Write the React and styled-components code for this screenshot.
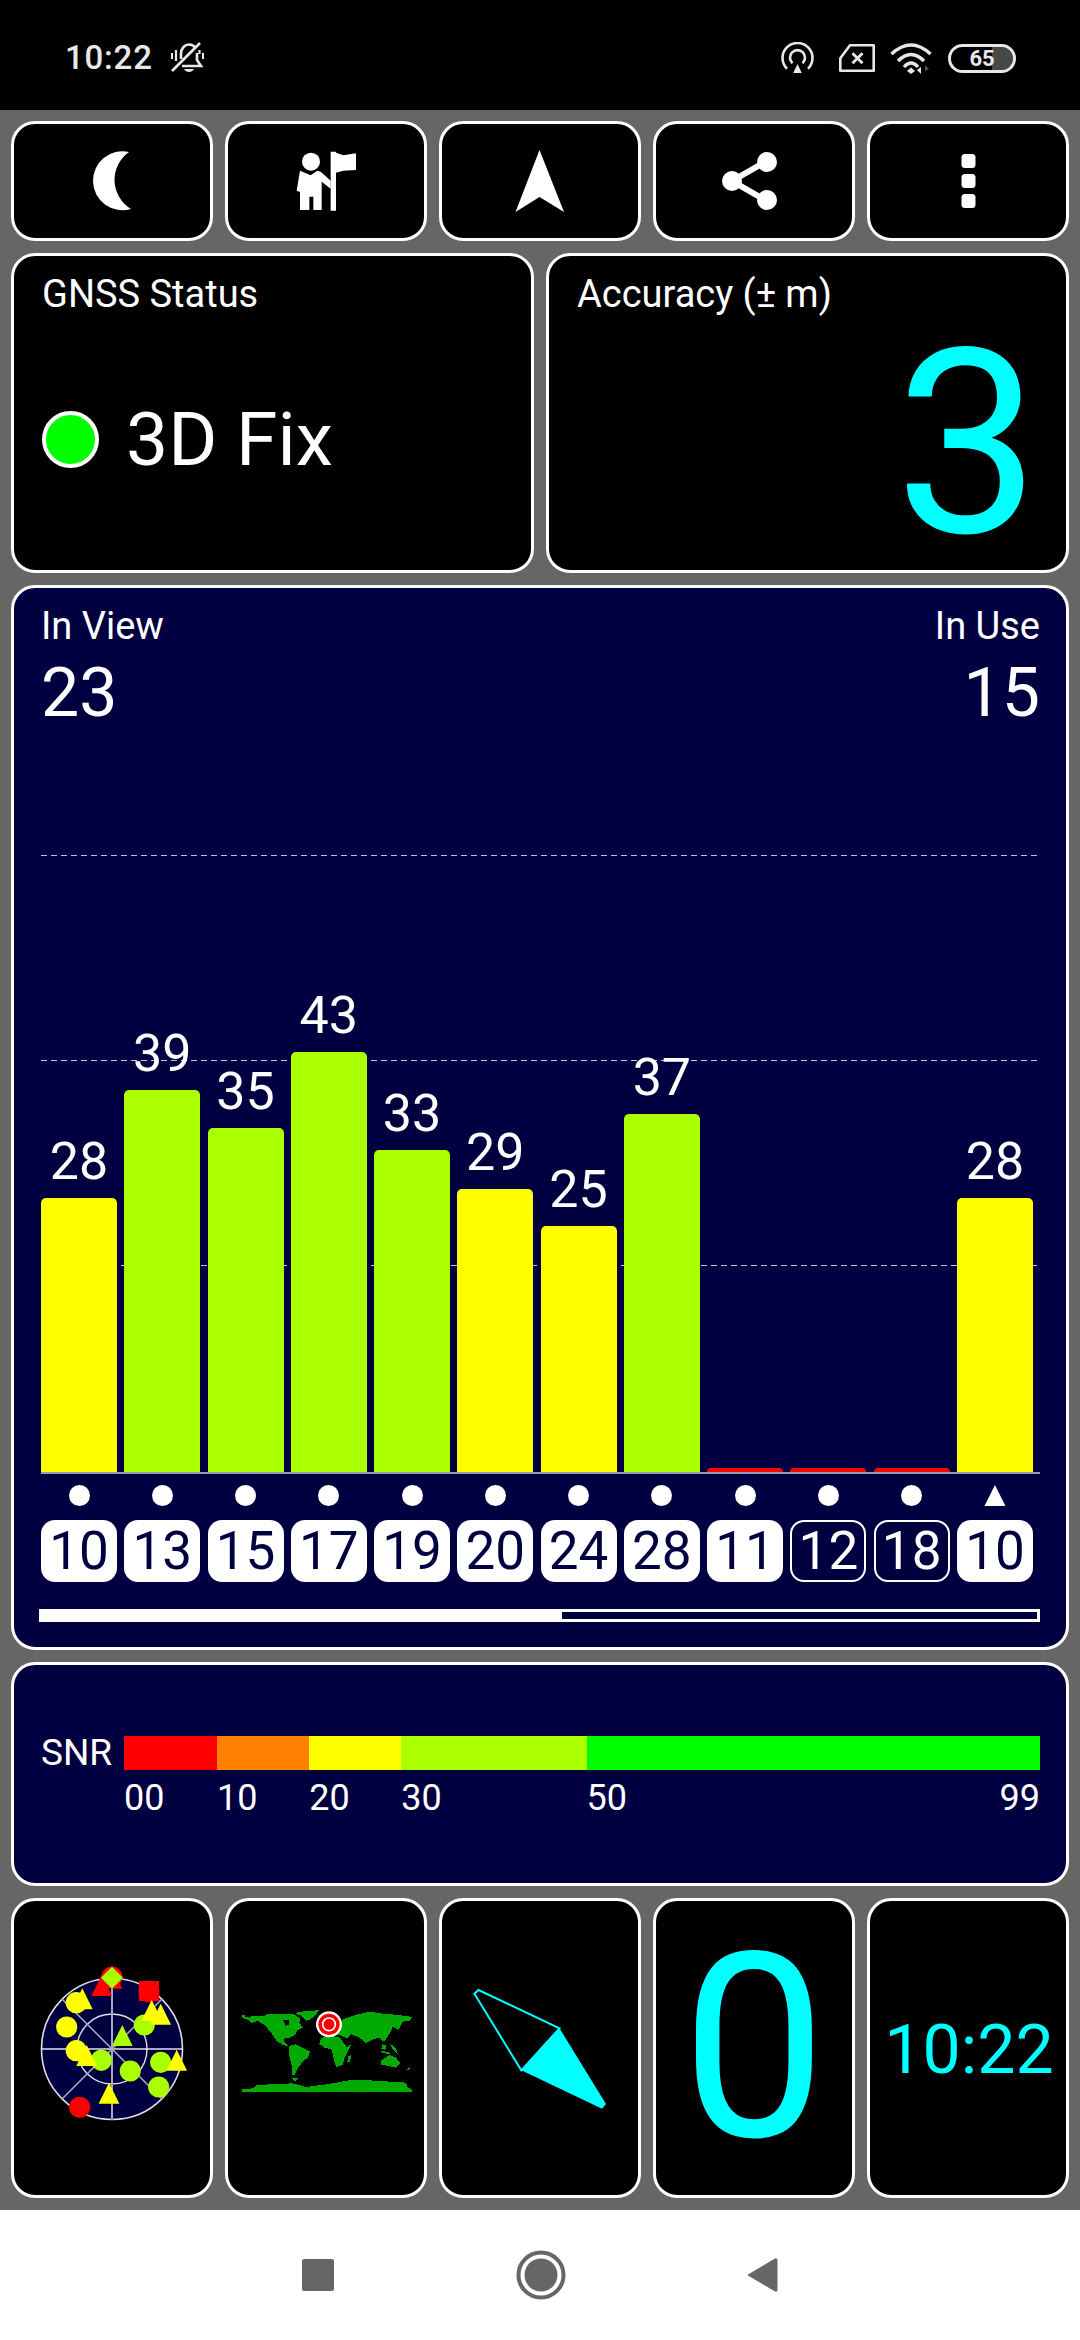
import React from "react";
import styled, { createGlobalStyle } from "styled-components";

const NAVY = "#000040";
const CYAN = "#00ffff";
const LIME = "#aaff00";
const YELLOW = "#ffff00";
const RED = "#ff0000";

const Global = createGlobalStyle`
  html, body { margin: 0; padding: 0; background: #fff; }
  * { box-sizing: border-box; }
  body { font-family: Roboto, "Liberation Sans", sans-serif; }
`;

const Screen = styled.div`
  width: 1080px;
  height: 2340px;
  display: flex;
  flex-direction: column;
  overflow: hidden;
`;

const StatusBar = styled.header`
  height: 110px;
  flex: none;
  background: #000;
  color: #e8e8e8;
  display: flex;
  align-items: center;
  padding: 6px 64px 0 65px;
  svg { display: block; flex: none; }
`;
const Clock = styled.span`
  font-size: 33px;
  font-weight: 500;
  letter-spacing: 0.8px;
  line-height: 40px;
  margin-right: 17px;
`;
const StatusRight = styled.div`
  margin-left: auto;
  display: flex;
  align-items: center;
`;
const Battery = styled.span`
  width: 68px;
  height: 29px;
  border: 3px solid #e8e8e8;
  border-radius: 15px;
  font-size: 22px;
  font-weight: 700;
  line-height: 23px;
  text-align: center;
  margin-left: 16px;
  background: linear-gradient(90deg, transparent 66%, #484848 66%);
  background-clip: padding-box;
`;

const Main = styled.main`
  flex: none;
  height: 2100px;
  background: #666;
  padding: 11px 11px 13px;
  display: flex;
  flex-direction: column;
  gap: 12px;
`;
const Row = styled.div`
  display: grid;
  grid-template-columns: repeat(${(p) => p.$cols}, 1fr);
  column-gap: 12px;
  height: ${(p) => p.$h}px;
  flex: none;
`;
const Card = styled.div`
  background: ${(p) => (p.$navy ? NAVY : "#000")};
  border: 3px solid #fff;
  border-radius: 24px;
  color: #fff;
  min-width: 0;
`;
const IconCard = styled(Card)`
  display: flex;
  align-items: center;
  justify-content: center;
  svg { display: block; flex: none; }
`;
const BigDigit = styled.span`
  font-size: 258px;
  line-height: 200px;
  color: ${CYAN};
`;
const TimeValue = styled.span`
  font-size: 68px;
  line-height: 80px;
  color: ${CYAN};
  margin: 4px 0 0 2px;
`;

const InfoCard = styled(Card)`
  padding: 16px 26px 0 28px;
  display: flex;
  flex-direction: column;
`;
const Label = styled.div`
  font-size: 38px;
  line-height: 44px;
`;
const FixRow = styled.div`
  display: flex;
  align-items: center;
  gap: 27px;
  height: 80px;
  margin-top: 83px;
`;
const FixDot = styled.span`
  width: 57px;
  height: 57px;
  border-radius: 50%;
  background: #00ff00;
  border: 4px solid #fff;
  flex: none;
`;
const FixText = styled.span`
  font-size: 75px;
  line-height: 80px;
`;
const AccuracyValue = styled(BigDigit)`
  align-self: flex-end;
  margin: 28px 0 0;
`;

const SkyCard = styled(Card)`
  padding: 16px 26px 0 27px;
  display: flex;
  flex-direction: column;
`;
const SkyHeader = styled.div`
  display: flex;
  justify-content: space-between;
`;
const SkyStat = styled.div`
  text-align: ${(p) => p.$align};
`;
const SkyValue = styled.div`
  font-size: 68px;
  line-height: 90px;
`;
const Chart = styled.div`
  position: relative;
  height: 736px;
  border-bottom: 2px solid #9a9ab4;
`;
const GridLine = styled.div`
  position: absolute;
  left: 0;
  right: 0;
  height: 1px;
  background: repeating-linear-gradient(90deg, #c4c4d4 0 6px, transparent 6px 10px);
`;
const ColumnGrid = styled.div`
  display: grid;
  grid-template-columns: repeat(12, 76px);
  column-gap: 7.27px;
`;
const Bars = styled(ColumnGrid)`
  position: relative;
  height: 100%;
  align-items: end;
`;
const BarSlot = styled.div`
  display: flex;
  flex-direction: column;
  align-items: center;
`;
const BarValue = styled.span`
  font-size: 52px;
  line-height: 48px;
  margin-bottom: 12px;
`;
const Bar = styled.div`
  width: 76px;
  background: ${(p) => p.$color};
  border-radius: 5px 5px 0 0;
`;
const Markers = styled(ColumnGrid)`
  margin-top: 11px;
  height: 21px;
  justify-items: center;
`;
const Dot = styled.span`
  width: 21px;
  height: 21px;
  border-radius: 50%;
  background: #fff;
`;
const Tri = styled.span`
  width: 21px;
  height: 21px;
  background: #fff;
  clip-path: polygon(50% 0, 100% 100%, 0 100%);
`;
const Badges = styled(ColumnGrid)`
  margin-top: 14px;
`;
const Badge = styled.span`
  height: 62px;
  border-radius: 14px;
  font-size: 53px;
  line-height: ${(p) => (p.$off ? "58px" : "62px")};
  text-align: center;
  background: ${(p) => (p.$off ? NAVY : "#fff")};
  color: ${(p) => (p.$off ? "#fff" : NAVY)};
  border: ${(p) => (p.$off ? "2px solid #fff" : "none")};
`;
const Progress = styled.div`
  height: 13px;
  margin: 27px 0 0 -2px;
  border: 3px solid #fff;
  background: linear-gradient(90deg, #fff 52.3%, ${NAVY} 52.3%);
`;

const SnrCard = styled(Card)`
  padding: 71px 26px 0 27px;
`;
const SnrRow = styled.div`
  display: flex;
  align-items: center;
`;
const SnrLabel = styled.span`
  width: 83px;
  font-size: 37px;
  line-height: 34px;
  flex: none;
`;
const Segments = styled.div`
  flex: 1;
  display: flex;
  height: 34px;
`;
const Segment = styled.div`
  flex: ${(p) => p.$w} 0 0;
  background: ${(p) => p.$color};
`;
const ScaleRow = styled.div`
  display: flex;
  margin: 10px 0 0 83px;
  font-size: 36px;
  line-height: 36px;
`;
const Tick = styled.div`
  flex: ${(p) => p.$w} 0 0;
  display: flex;
  justify-content: space-between;
`;

const MapBox = styled.div`
  margin-bottom: 4px;
`;

const NavBar = styled.nav`
  flex: 1;
  background: #fff;
  display: flex;
  align-items: center;
  justify-content: center;
  gap: 182px;
  svg { display: block; }
`;

const Stroke = ({ children, ...rest }) => (
  <svg fill="none" stroke="#e8e8e8" strokeWidth="2.6" {...rest}>
    {children}
  </svg>
);

const BellOff = () => (
  <Stroke width="36" height="32" viewBox="0 0 36 32">
    <path d="M2 29 L30 1" />
    <path d="M11 17 V12 C11 6 15 2.5 19 2.5 C21.5 2.5 24 3.8 25.5 6 M27 11 V18 L31 24 H12" />
    <path d="M2 11 V17 M33 11 V17" strokeWidth="2" />
    <path d="M6 8 V19 M29.5 8 V12" strokeWidth="2.2" />
    <path d="M14 27 H24 C22 31 16 31 14 27 Z" fill="#e8e8e8" stroke="none" />
  </Stroke>
);
const Hotspot = () => (
  <Stroke width="33" height="32" viewBox="0 0 33 32" style={{ marginRight: 25 }}>
    <path d="M6 26.7 A15 15 0 1 1 27 26.7" />
    <path d="M11.5 21.2 A7.5 7.5 0 1 1 21.5 21.2" />
    <path d="M16.5 22 L20.8 31 H12.2 Z" fill="#e8e8e8" stroke="none" />
  </Stroke>
);
const Sim = () => (
  <Stroke width="36" height="28" viewBox="0 0 36 28" style={{ marginRight: 15 }}>
    <path d="M1.3 14.3 L11 1.3 H34.7 V26.7 H1.3 Z" strokeLinejoin="round" />
    <path d="M13.5 9.3 L23.5 19.3 M23.5 9.3 L13.5 19.3" strokeWidth="2.8" />
  </Stroke>
);
const Wifi = () => (
  <Stroke width="42" height="31" viewBox="0 0 42 31" strokeWidth="3.4">
    <path d="M1.5 11 Q21 -7 40.5 11" />
    <path d="M8 18 Q21 5 34 18" />
    <path d="M14 24 Q21 16 28 24" />
    <path d="M21 24.5 L25 28 L21 31 L17 28 Z" fill="#e8e8e8" stroke="none" />
    <path d="M31 24 V31 L27 27 Z" fill="#e8e8e8" stroke="none" />
    <path d="M35 22 L39 26 L35 28 Z" fill="#555" stroke="none" />
  </Stroke>
);

const Moon = () => (
  <svg width="196" height="114" viewBox="13 125 196 114">
    <path d="M128 153 A29.5 29.5 0 1 0 130 210 A34 34 0 0 1 128 153 Z" fill="#fff" />
  </svg>
);
const PersonFlag = () => (
  <svg width="90" height="90" viewBox="0 0 270 270" style={{ margin: "8px 0 0 -2px" }}>
    <circle cx="93" cy="65" r="27" fill="#fff" />
    <path
      d="M60 92 L92 106 L112 92 L122 95 L152 122 L152 146 L125 125 V210 H100 V170 H88 V210 H60 V156 L50 152 Z"
      fill="#fff"
    />
    <path d="M152 35 H168 V38 L190 46 L228 40 V90 L190 92 L168 98 V212 H152 Z" fill="#fff" />
  </svg>
);
const NavArrow = () => (
  <svg width="50" height="64" viewBox="0 0 50 64">
    <path d="M24.5 1 L49 63 L24.5 48 L0.5 63 Z" fill="#fff" />
  </svg>
);
const Share = () => (
  <svg width="60" height="62" viewBox="0 0 60 62" style={{ marginRight: 6 }}>
    <path d="M44 12 L11 31 L44 50" stroke="#fff" strokeWidth="6" fill="none" />
    <circle cx="46" cy="12" r="10" fill="#fff" />
    <circle cx="11" cy="31" r="10" fill="#fff" />
    <circle cx="46" cy="50" r="10" fill="#fff" />
  </svg>
);
const More = () => (
  <svg width="15" height="55" viewBox="0 0 15 55">
    {[0, 20, 40].map((y) => (
      <rect key={y} x="0.5" y={y} width="14" height="14" rx="3.5" fill="#fff" />
    ))}
  </svg>
);

const circles = [
  [112, 1976, RED], [149, 1990.7, RED], [76.3, 2001.7, YELLOW], [66.7, 2026, YELLOW],
  [144.3, 2024, LIME], [76.3, 2049.7, YELLOW], [101.3, 2059.3, LIME], [130.3, 2070, LIME],
  [160.7, 2061.3, LIME], [158.7, 2086, LIME], [79.7, 2106.3, RED],
];
const triangles = [
  [112, 1966.7, RED], [101.7, 1974, RED], [82.3, 1987.3, YELLOW], [151.7, 1999, YELLOW],
  [160.7, 2002.7, YELLOW], [122.3, 2024, LIME], [86.7, 2044, YELLOW], [176.7, 2048.7, YELLOW],
  [109, 2081.7, YELLOW],
];
const Radar = () => (
  <svg width="196" height="294" viewBox="14 1900 196 294">
    <circle cx="112" cy="2048" r="70.5" fill={NAVY} stroke="#dcdcea" strokeWidth="1.6" />
    <circle cx="112" cy="2048" r="35" fill="none" stroke="#dcdcea" strokeWidth="1.4" />
    <path d="M112 1977 V2119" stroke="#a8a8c0" strokeWidth="2" />
    <path d="M41 2048 H183" stroke="#e0e0ea" strokeWidth="1.6" />
    <path d="M62 1998 L162 2098 M162 1998 L62 2098" stroke="#a8a8c0" strokeWidth="1.5" />
    {circles.map(([x, y, c]) => (
      <circle key={`${x}-${y}`} cx={x} cy={y} r="10.6" fill={c} />
    ))}
    <rect x="139" y="1980" width="20" height="20" fill={RED} />
    {triangles.map(([x, y, c]) => (
      <path key={`${x}-${y}`} d={`M${x} ${y} l10.4 21 h-20.8 Z`} fill={c} />
    ))}
    <path d="M112 1965.7 l11 11 l-11 11 l-11 -11 Z" fill={LIME} />
  </svg>
);

const land = [
  "M48 72 L56 72 L58 78 L72 80 L76 74 L110 76 L128 68 L165 70 L200 68 L222 82 L220 96 L232 110 L214 118 L206 132 L190 140 L178 142 L172 150 L187 166 L172 162 L152 150 L136 126 L116 102 L96 90 L76 96 L70 88 L48 80 Z",
  "M205 66 L240 60 L278 58 L270 72 L252 86 L240 90 L226 74 Z",
  "M190 165 L210 160 L234 172 L253 182 L245 200 L232 210 L218 228 L206 252 L197 250 L197 225 L190 195 Z",
  "M285 142 L310 132 L342 140 L350 152 L362 168 L376 160 L366 180 L356 200 L350 222 L330 228 L322 200 L318 176 L296 170 L280 158 Z",
  "M282 128 L290 118 L300 116 L310 108 L340 105 L352 84 L388 72 L430 62 L470 68 L520 72 L558 78 L552 90 L530 92 L518 116 L500 108 L490 130 L474 152 L458 140 L440 146 L420 156 L400 140 L376 130 L362 142 L342 132 L312 128 Z",
  "M466 208 L490 192 L510 200 L522 216 L510 230 L486 224 L466 222 Z",
  "M48 302 L48 294 L85 292 L86 284 L130 280 L200 277 L240 288 L300 280 L370 268 L430 268 L540 275 L545 290 L558 295 L558 302 Z",
  "M366 196 L376 192 L372 212 L364 214 Z",
  "M460 178 L488 184 L494 190 L470 186 Z",
  "M490 155 L510 172 L516 190 L500 176 Z",
  "M468 160 L480 164 L478 176 L466 174 Z",
  "M542 236 L552 226 L554 232 L546 240 Z",
  "M196 262 L218 262 L206 272 Z",
  "M268 95 L278 88 L280 102 L270 104 Z",
];
const WorldMap = () => (
  <MapBox>
    <svg width="196" height="110" viewBox="6 0 588 330" shapeRendering="crispEdges">
      {land.map((d) => (
        <path key={d} d={d} fill="#00aa00" />
      ))}
      <path d="M172 88 L188 86 L190 102 L178 104 Z" fill="#000" />
      <circle cx="309" cy="100" r="39" fill="#fff" shapeRendering="auto" />
      <circle cx="309" cy="100" r="32" fill={RED} shapeRendering="auto" />
      <circle cx="309" cy="100" r="19" fill="none" stroke="#fff" strokeWidth="5" shapeRendering="auto" />
    </svg>
  </MapBox>
);
const Compass = () => (
  <svg width="196" height="294" viewBox="442 1900 196 294">
    <path
      d="M474.4 1992.7 L478.5 1989 L559.5 2027.3 L521.3 2069.3 Z"
      fill="none"
      stroke={CYAN}
      strokeWidth="2"
    />
    <path d="M559.5 2027.3 L521.3 2069.3 L602 2107.7 L606 2103 Z" fill={CYAN} />
  </svg>
);

const sats = [
  [28, "10", YELLOW, 274], [39, "13", LIME, 382], [35, "15", LIME, 344], [43, "17", LIME, 420],
  [33, "19", LIME, 322], [29, "20", YELLOW, 283], [25, "24", YELLOW, 246], [37, "28", LIME, 358],
  [0, "11", RED, 4], [0, "12", RED, 4], [0, "18", RED, 4], [28, "10", YELLOW, 274],
];
const outlined = new Set([9, 10]);
const snr = [
  [93, RED, "00"], [92, "#ff8000", "10"], [92, YELLOW, "20"], [185, LIME, "30"], [453, "#00ff00", "50"],
];

export default function App() {
  return (
    <Screen>
      <Global />
      <StatusBar>
        <Clock>10:22</Clock>
        <BellOff />
        <StatusRight>
          <Hotspot />
          <Sim />
          <Wifi />
          <Battery>65</Battery>
        </StatusRight>
      </StatusBar>
      <Main>
        <Row $cols={5} $h={120}>
          <IconCard><Moon /></IconCard>
          <IconCard><PersonFlag /></IconCard>
          <IconCard><NavArrow /></IconCard>
          <IconCard><Share /></IconCard>
          <IconCard><More /></IconCard>
        </Row>
        <Row $cols={2} $h={320}>
          <InfoCard>
            <Label>GNSS Status</Label>
            <FixRow>
              <FixDot />
              <FixText>3D Fix</FixText>
            </FixRow>
          </InfoCard>
          <InfoCard>
            <Label>Accuracy (± m)</Label>
            <AccuracyValue>3</AccuracyValue>
          </InfoCard>
        </Row>
        <Row $cols={1} $h={1065}>
          <SkyCard $navy>
            <SkyHeader>
              <SkyStat $align="left">
                <Label>In View</Label>
                <SkyValue>23</SkyValue>
              </SkyStat>
              <SkyStat $align="right">
                <Label>In Use</Label>
                <SkyValue>15</SkyValue>
              </SkyStat>
            </SkyHeader>
            <Chart>
              {[206, 411, 616].map((b) => (
                <GridLine key={b} style={{ bottom: b }} />
              ))}
              <Bars>
                {sats.map(([v, , c, h], i) => (
                  <BarSlot key={i}>
                    {v > 0 && <BarValue>{v}</BarValue>}
                    <Bar $color={c} style={{ height: h }} />
                  </BarSlot>
                ))}
              </Bars>
            </Chart>
            <Markers>
              {sats.map((_, i) => (i === 11 ? <Tri key={i} /> : <Dot key={i} />))}
            </Markers>
            <Badges>
              {sats.map(([, id], i) => (
                <Badge key={i} $off={outlined.has(i)}>{id}</Badge>
              ))}
            </Badges>
            <Progress />
          </SkyCard>
        </Row>
        <Row $cols={1} $h={224}>
          <SnrCard $navy>
            <SnrRow>
              <SnrLabel>SNR</SnrLabel>
              <Segments>
                {snr.map(([w, c]) => (
                  <Segment key={c} $w={w} $color={c} />
                ))}
              </Segments>
            </SnrRow>
            <ScaleRow>
              {snr.map(([w, , t], i) => (
                <Tick key={t} $w={w}>
                  <span>{t}</span>
                  {i === snr.length - 1 && <span>99</span>}
                </Tick>
              ))}
            </ScaleRow>
          </SnrCard>
        </Row>
        <Row $cols={5} $h={299}>
          <IconCard><Radar /></IconCard>
          <IconCard><WorldMap /></IconCard>
          <IconCard><Compass /></IconCard>
          <IconCard><BigDigit>0</BigDigit></IconCard>
          <IconCard><TimeValue>10:22</TimeValue></IconCard>
        </Row>
      </Main>
      <NavBar>
        <svg width="32" height="32" viewBox="0 0 32 32">
          <rect width="32" height="32" rx="2" fill="#666" />
        </svg>
        <svg width="50" height="50" viewBox="0 0 50 50">
          <circle cx="25" cy="25" r="22.5" fill="none" stroke="#666" strokeWidth="4" />
          <circle cx="25" cy="25" r="16.5" fill="#666" />
        </svg>
        <svg width="32" height="36" viewBox="0 0 32 36" style={{ marginLeft: -2 }}>
          <path d="M2 18 L29 2 Q31 1 31 3 V33 Q31 35 29 34 Z" fill="#666" stroke="#666" strokeLinejoin="round" />
        </svg>
      </NavBar>
    </Screen>
  );
}
